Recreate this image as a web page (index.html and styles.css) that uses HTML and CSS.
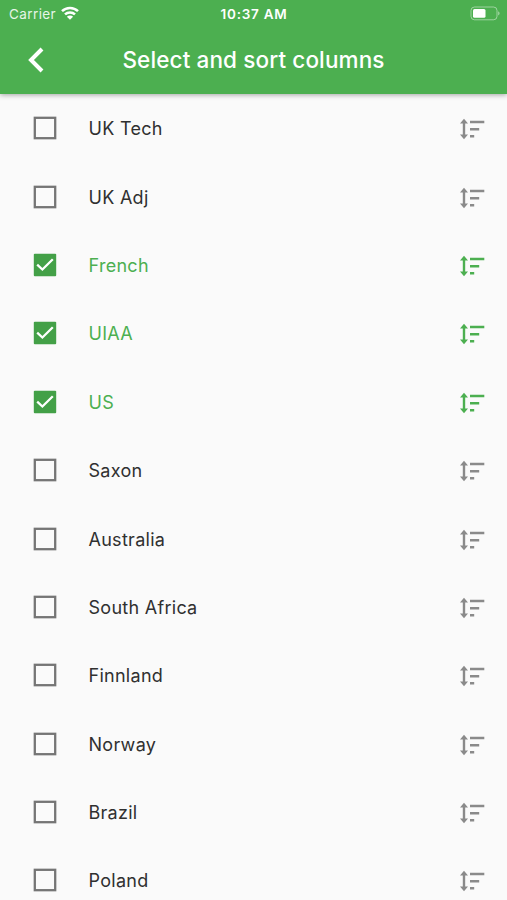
FILE: index.html
```
<!DOCTYPE html>
<html lang="en">
    <head>
        <title>Select and sort columns</title>
        <meta charset="utf-8">
        <meta name="viewport" content="width=device-width, initial-scale=1">
        <link rel="stylesheet" href="styles.css">
    </head>
    <body>
        <!-- shared icons -->
        <svg class="icons">
            <symbol id="box" viewBox="0 0 24 24">
                <rect x="1.8" y="1.8" width="20.4" height="20.4" fill="none" stroke="#757575" stroke-width="2.3"/>
            </symbol>
            <symbol id="checked" viewBox="0 0 24 24">
                <rect x=".8" y=".8" width="22.4" height="22.4" rx="1" fill="#43a047"/>
                <path d="M4.2 11.6L9.4 16.5L19.8 6.2" fill="none" stroke="#fff" stroke-width="2.3"/>
            </symbol>
            <symbol id="sort" viewBox="0 0 26 22">
                <path d="M5 4V18M11 4H25.3M11 11.2H20.2M11 18.2H15.2" fill="none" stroke="currentColor" stroke-width="2.4"/>
                <path d="M1 5.4L5 .8L9 5.4ZM1 16.6L5 21.2L9 16.6Z" fill="currentColor"/>
            </symbol>
        </svg>
        <header>
            <div class="status">
                <div class="carrier">
                    <span>Carrier</span>
                    <svg class="wifi" viewBox="0 0 18 14">
                        <path d="M1 5.2A11.3 11.3 0 0 1 17 5.2M4 8.4A7.2 7.2 0 0 1 14 8.4" fill="none" stroke="#fff" stroke-width="2.5"/>
                        <path d="M9 13.8L5.9 10.8A4.4 4.4 0 0 1 12.1 10.8Z" fill="#fff"/>
                    </svg>
                </div>
                <span class="time">10:37 AM</span>
                <svg class="battery" viewBox="0 0 31 15">
                    <rect x="1" y="1" width="26" height="12.8" rx="3.5" fill="none" stroke="#fff" stroke-opacity=".45"/>
                    <rect x="3" y="3" width="12.5" height="8.8" rx="1.5" fill="#fff"/>
                    <path d="M28.2 5.3Q31 7.4 28.2 9.5Z" fill="#fff" fill-opacity=".5"/>
                </svg>
            </div>
            <div class="toolbar">
                <svg class="back" viewBox="0 0 16 26">
                    <path d="M14 2L3 13L14 24" fill="none" stroke="#fff" stroke-width="4"/>
                </svg>
                <h1>Select and sort columns</h1>
            </div>
        </header>
        <ul class="columns">
            <li><svg class="check"><use href="#box"/></svg><span>UK Tech</span><svg class="sort"><use href="#sort"/></svg></li>
            <li><svg class="check"><use href="#box"/></svg><span>UK Adj</span><svg class="sort"><use href="#sort"/></svg></li>
            <li class="active"><svg class="check"><use href="#checked"/></svg><span>French</span><svg class="sort"><use href="#sort"/></svg></li>
            <li class="active"><svg class="check"><use href="#checked"/></svg><span>UIAA</span><svg class="sort"><use href="#sort"/></svg></li>
            <li class="active"><svg class="check"><use href="#checked"/></svg><span>US</span><svg class="sort"><use href="#sort"/></svg></li>
            <li><svg class="check"><use href="#box"/></svg><span>Saxon</span><svg class="sort"><use href="#sort"/></svg></li>
            <li><svg class="check"><use href="#box"/></svg><span>Australia</span><svg class="sort"><use href="#sort"/></svg></li>
            <li><svg class="check"><use href="#box"/></svg><span>South Africa</span><svg class="sort"><use href="#sort"/></svg></li>
            <li><svg class="check"><use href="#box"/></svg><span>Finnland</span><svg class="sort"><use href="#sort"/></svg></li>
            <li><svg class="check"><use href="#box"/></svg><span>Norway</span><svg class="sort"><use href="#sort"/></svg></li>
            <li><svg class="check"><use href="#box"/></svg><span>Brazil</span><svg class="sort"><use href="#sort"/></svg></li>
            <li><svg class="check"><use href="#box"/></svg><span>Poland</span><svg class="sort"><use href="#sort"/></svg></li>
        </ul>
    </body>
</html>
```
FILE: styles.css
```
html, body {
    margin: 0;
    padding: 0;
    height: 900px;
    overflow: hidden;
    color: #303030;
    background-color: #fafafa;
    font-family: Inter, sans-serif;
}

svg {
    display: block;
    flex: none;
}

.icons {
    display: none;
}

header {
    height: 94px;
    color: #fff;
    background-color: #4caf50;
    box-shadow: 0 1px 5px rgba(0, 0, 0, 0.35);
}

.status {
    display: grid;
    grid-template-columns: 1fr auto 1fr;
    align-items: center;
    height: 27px;
    padding: 0 6px 0 9px;
    font-size: 13.5px;
}

.carrier {
    display: flex;
    align-items: center;
    gap: 5px;
    color: #e6f5e7;
    letter-spacing: 0.4px;
}

.wifi {
    width: 18px;
    height: 14px;
    margin-top: -2px;
}

.time {
    margin-left: -2px;
    font-weight: 600;
    letter-spacing: 0.75px;
}

.battery {
    width: 31px;
    height: 15px;
    justify-self: end;
}

.toolbar {
    display: grid;
    grid-template-columns: 72px 1fr 72px;
    align-items: center;
    height: 65px;
}

.back {
    width: 16px;
    height: 26px;
    margin-left: 28px;
}

h1 {
    margin: 0;
    text-align: center;
    font-size: 22.5px;
    font-weight: 500;
    letter-spacing: 0.12px;
    white-space: nowrap;
}

.columns {
    margin: 0;
    padding: 0;
    list-style: none;
}

.columns li {
    display: flex;
    align-items: center;
    height: 68.4px;
    padding: 0 22px 0 33px;
    font-size: 18px;
    letter-spacing: 0.28px;
}

.columns span {
    flex: 1;
    margin: 1px 0 0 31.5px;
}

.check {
    width: 24px;
    height: 24px;
}

.sort {
    width: 26px;
    height: 22px;
    margin-top: 2px;
    color: #8a8a8a;
}

.active, .active .sort {
    color: #4caf50;
}
```
